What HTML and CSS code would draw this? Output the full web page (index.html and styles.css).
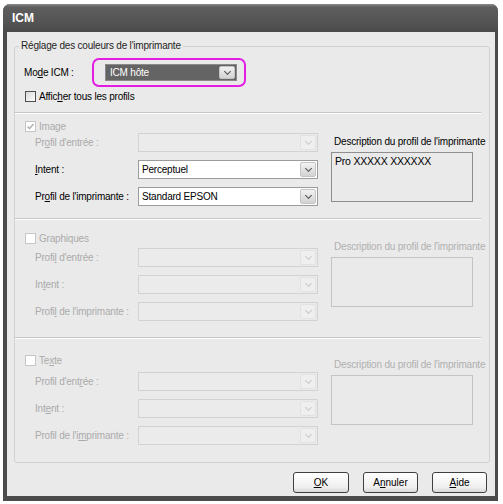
FILE: index.html
```html
<!DOCTYPE HTML>
<html lang="fr">
  <head>
    <title>ICM</title>
    <meta charset="utf-8">
    <link rel="stylesheet" href="styles.css">
  </head>
  <body>

  <div class="window">
    <div class="titlebar">ICM</div>

    <div class="client">
      <fieldset class="group">
        <legend>Réglage des couleurs de l'imprimante</legend>

        <div class="mode-row">
          <span class="mode-label">Mo<u>d</u>e ICM :</span>
          <div class="highlight">
            <div class="select select-dark"><span class="value">ICM hôte</span><span class="arrow"></span></div>
          </div>
        </div>

        <label class="check check-all"><span class="box"></span><span>Affic<u>h</u>er tous les profils</span></label>

        <div class="sep sep-1"></div>

        <!-- image -->
        <div class="section sec-image">
          <div class="section-main">
            <label class="check disabled"><span class="box"><svg width="9" height="9" viewBox="0 0 9 9"><polyline points="1.5,4.5 3.5,6.5 7.5,2" fill="none" stroke="#b4b4b4" stroke-width="1.6"/></svg></span><span>Image</span></label>
            <div class="fields">
              <div class="field disabled"><span class="field-label">Pr<u>o</u>fil d'entrée :</span><span class="select disabled"><span class="value"></span><span class="arrow"></span></span></div>
              <div class="field"><span class="field-label"><u>I</u>ntent :</span><span class="select"><span class="value">Perceptuel</span><span class="arrow"></span></span></div>
              <div class="field"><span class="field-label">Pr<u>o</u>fil de l'imprimante :</span><span class="select"><span class="value">Standard EPSON</span><span class="arrow"></span></span></div>
            </div>
          </div>
          <div class="desc">
            <div class="desc-title">Description du profil de l'imprimante</div>
            <div class="desc-box">Pro XXXXX XXXXXX</div>
          </div>
        </div>

        <div class="sep sep-2"></div>

        <!-- graphiques -->
        <div class="section sec-graph">
          <div class="section-main">
            <label class="check disabled"><span class="box"></span><span>Graphiques</span></label>
            <div class="fields">
              <div class="field disabled"><span class="field-label">Profi<u>l</u> d'entrée :</span><span class="select disabled"><span class="value"></span><span class="arrow"></span></span></div>
              <div class="field disabled"><span class="field-label">In<u>t</u>ent :</span><span class="select disabled"><span class="value"></span><span class="arrow"></span></span></div>
              <div class="field disabled"><span class="field-label">Profi<u>l</u> de l'imprimante :</span><span class="select disabled"><span class="value"></span><span class="arrow"></span></span></div>
            </div>
          </div>
          <div class="desc disabled">
            <div class="desc-title">Description du profil de l'imprimante</div>
            <div class="desc-box"></div>
          </div>
        </div>

        <div class="sep sep-3"></div>

        <!-- texte -->
        <div class="section sec-text">
          <div class="section-main">
            <label class="check disabled"><span class="box"></span><span>Te<u>x</u>te</span></label>
            <div class="fields">
              <div class="field disabled"><span class="field-label">Profil d'ent<u>r</u>ée :</span><span class="select disabled"><span class="value"></span><span class="arrow"></span></span></div>
              <div class="field disabled"><span class="field-label">Int<u>e</u>nt :</span><span class="select disabled"><span class="value"></span><span class="arrow"></span></span></div>
              <div class="field disabled"><span class="field-label">Profil de l'i<u>m</u>primante :</span><span class="select disabled"><span class="value"></span><span class="arrow"></span></span></div>
            </div>
          </div>
          <div class="desc disabled">
            <div class="desc-title">Description du profil de l'imprimante</div>
            <div class="desc-box"></div>
          </div>
        </div>
      </fieldset>

      <div class="buttons">
        <button class="button button-ok"><u>O</u>K</button>
        <button class="button">A<u>n</u>nuler</button>
        <button class="button"><u>A</u>ide</button>
      </div>
    </div>
  </div>

  </body>
</html>
```

FILE: styles.css
```css
* {
  box-sizing: border-box;
}
html {
  height: 100%;
}
body {
  margin: 0;
  padding: 4px 0 0 3px;
  background: #ffffff;
  color: #000000;
  font-family: "Liberation Sans", Arial, sans-serif;
  font-size: 10px;
  letter-spacing: -0.2px;
}

.window {
  width: 495px;
  height: 497px;
  display: flex;
  flex-direction: column;
  background: #4b4b4b;
  border-radius: 7px 7px 0 0;
  overflow: hidden;
}

.titlebar {
  height: 28px;
  line-height: 28px;
  padding-left: 9px;
  color: #ffffff;
  font-size: 12px;
  font-weight: bold;
  letter-spacing: 0;
  background: linear-gradient(#8c8c8c, #5e5e5e 3px, #555555 60%, #4a4a4a);
}

.client {
  flex: 1;
  margin: 0 3px 5px 4px;
  background: #eaeaea;
  display: flex;
  flex-direction: column;
}

.group {
  margin: 8px 5px 0 7px;
  padding: 0 8px 17px 10px;
  border: 1px solid #d2d2d2;
  border-radius: 3px;
  min-width: 0;
}
.group legend {
  padding: 0 2px;
  margin-left: -6px;
  line-height: 12px;
  color: #1e1e1e;
}

/* mode */
.mode-row {
  display: flex;
  align-items: center;
  margin: 6px 0 0 -1px;
}
.mode-label {
  width: 68px;
}
.highlight {
  width: 154px;
  height: 29px;
  border: 2px solid #e31ee3;
  border-radius: 7px;
  display: flex;
  align-items: center;
  padding-left: 11px;
}

/* checkbox */
.check {
  display: flex;
  align-items: center;
  gap: 3px;
  height: 11px;
}
.check-all {
  margin-top: 4px;
}
.box {
  width: 11px;
  height: 11px;
  display: flex;
  align-items: center;
  justify-content: center;
  border: 1px solid #4f4f4f;
  background: linear-gradient(135deg, #d8d8d8, #ffffff);
}
.check.disabled {
  color: #ababab;
}
.check.disabled .box {
  border-color: #c6c6c6;
  background: #ffffff;
}

.sep {
  height: 2px;
  margin-left: -10px;
  border-top: 1px solid #c6c6c6;
  border-bottom: 1px solid #ffffff;
}
.sep-1 { margin-top: 10px; }
.sep-2 { margin-top: 12px; }
.sep-3 { margin-top: 16px; }

/* sections */
.section {
  display: flex;
  align-items: flex-start;
}
.section-main {
  width: 293px;
}
.fields {
  padding-left: 10px;
}
.field {
  display: flex;
  align-items: center;
  height: 19px;
  margin-top: 8px;
}
.field.disabled {
  color: #ababab;
}
.field-label {
  width: 103px;
  white-space: nowrap;
}

.sec-image { padding-top: 7px; }
.sec-image .field:first-child { margin-top: 1px; }
.sec-image .desc { margin-top: 14px; }

.sec-graph { padding-top: 13px; }
.sec-graph .field:first-child { margin-top: 4px; }
.sec-graph .desc { margin-top: 7px; }

.sec-text { padding-top: 16px; }
.sec-text .field:first-child { margin-top: 6px; }
.sec-text .desc { margin-top: 3px; }

/* combo */
.select {
  width: 180px;
  height: 19px;
  display: flex;
  border: 1px solid #9b9b9b;
  background: #ffffff;
}
.select .value {
  flex: 1;
  padding-left: 3px;
  line-height: 17px;
  white-space: nowrap;
}
.select .arrow {
  width: 16px;
  margin: 1px;
  border: 1px solid #c4c4c4;
  border-radius: 2px;
  background: linear-gradient(#f2f2f2, #d2d2d2);
  display: flex;
  align-items: center;
  justify-content: center;
}
.select .arrow::before {
  content: '';
  width: 4px;
  height: 4px;
  border-right: 1.5px solid #505050;
  border-bottom: 1.5px solid #505050;
  transform: translateY(-1px) rotate(45deg);
}
.select.disabled {
  border-color: #d2d2d2;
  background: #ebebeb;
}
.select.disabled .arrow {
  border-color: #e2e2e2;
  background: #efefef;
}
.select.disabled .arrow::before {
  border-color: #c9c9c9;
}
.select-dark {
  width: 132px;
  height: 17px;
  border-color: #8a8a8a;
  background: #646464;
  color: #ffffff;
}
.select-dark .value {
  line-height: 15px;
  padding-left: 4px;
}

/* description */
.desc {
  width: 142px;
  margin-left: 13px;
}
.desc-title {
  line-height: 14px;
  padding-left: 3px;
  white-space: nowrap;
}
.desc-box {
  height: 50px;
  margin-top: 3px;
  padding: 2px 3px;
  border: 1px solid #8e8e8e;
  font-size: 10.5px;
}
.desc.disabled {
  color: #b0b0b0;
}
.desc.disabled .desc-box {
  border-color: #c4c4c4;
}

/* buttons */
.buttons {
  display: flex;
  justify-content: flex-end;
  gap: 14px;
  margin-top: 9px;
  padding-right: 8px;
}
.button {
  width: 55px;
  height: 21px;
  padding: 0;
  font: inherit;
  color: #000000;
  border: 1px solid #3f3f3f;
  border-radius: 3px;
  background: linear-gradient(#ffffff, #efefef 75%, #d8d8d8);
}
.button-ok {
  width: 56px;
}
```
